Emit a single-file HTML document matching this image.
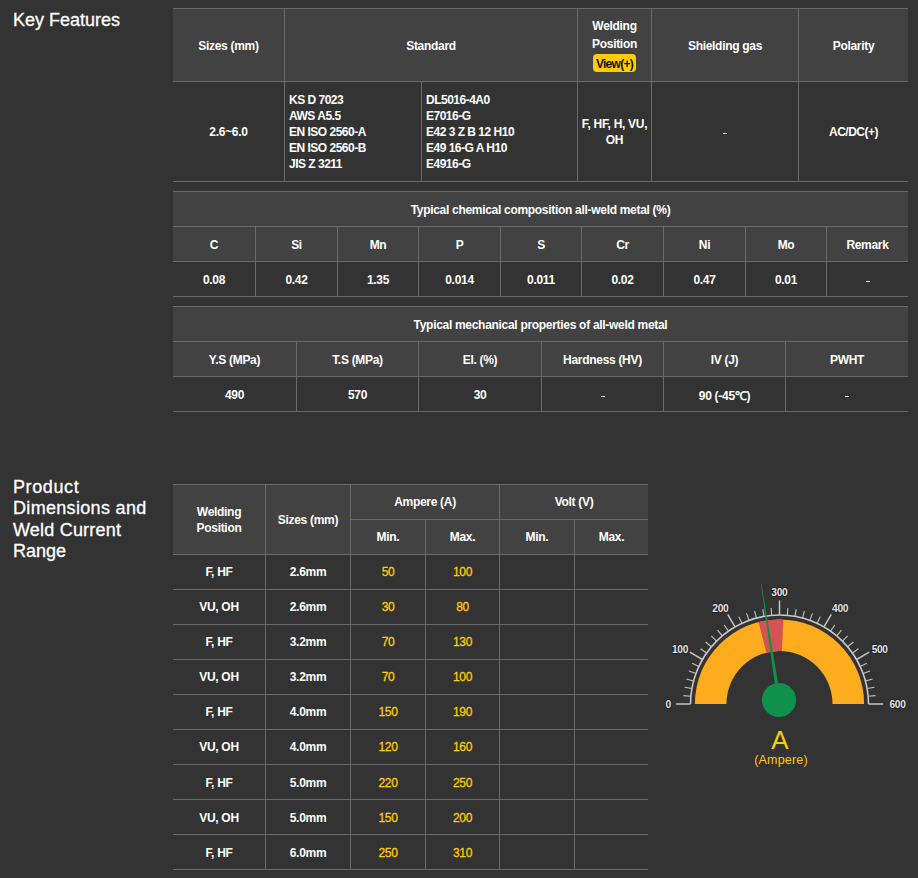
<!DOCTYPE html>
<html><head><meta charset="utf-8"><title>Key Features</title>
<style>
html,body{margin:0;padding:0;}
body{width:918px;height:878px;background:#333333;position:relative;overflow:hidden;font-family:"Liberation Sans",sans-serif;color:#ffffff;}
.r{position:absolute}
.c{position:absolute;display:flex;flex-direction:column;align-items:center;justify-content:center;text-align:center;font-size:12px;font-weight:bold;letter-spacing:-0.3px;white-space:nowrap;}
.left{align-items:flex-start;text-align:left;}
.lh16{line-height:16px}
.ls5{letter-spacing:-0.5px}
.o1{padding-top:2px;box-sizing:border-box}
.yel{color:#ffcc00;font-weight:normal;-webkit-text-stroke:0.3px #ffcc00}
.h{position:absolute;font-size:18px;line-height:26px;white-space:nowrap;-webkit-text-stroke:0.3px #fff}
.badge{background:#ffcc00;color:#111;font-weight:normal;border-radius:4px;width:43px;height:18px;line-height:18px;margin-top:1px;text-align:center;font-size:12px;font-weight:bold;letter-spacing:-0.7px}
.g{position:absolute;left:0;top:0}
.gl{font-family:"Liberation Sans",sans-serif;font-size:10.2px;font-weight:bold;fill:#e6e6e6;stroke:#111;stroke-width:1.2px;paint-order:stroke;letter-spacing:-0.35px}
.ga{font-family:"Liberation Sans",sans-serif;font-size:26px;fill:#ffcc00}
.gb{font-family:"Liberation Sans",sans-serif;font-size:12.5px;letter-spacing:0.2px;fill:#ffcc00}
</style></head><body>
<div class="h" style="left:13px;top:7px">Key Features</div><div class="h" style="left:13px;top:477px;line-height:21.4px;letter-spacing:0.2px"><span style="letter-spacing:0.6px">Product</span><br><span style="letter-spacing:0.32px">Dimensions and</span><br>Weld Current<br><span style="letter-spacing:0px">Range</span></div><div class="r" style="left:173px;top:9px;width:735px;height:72px;background:#424242"></div><div class="r" style="left:173px;top:8px;width:735px;height:1px;background:#6a6a6a"></div><div class="r" style="left:173px;top:81px;width:735px;height:1px;background:#6a6a6a"></div><div class="r" style="left:173px;top:181px;width:735px;height:1px;background:#6a6a6a"></div><div class="r" style="left:284px;top:9px;width:1px;height:172px;background:#6a6a6a"></div><div class="r" style="left:577px;top:9px;width:1px;height:172px;background:#6a6a6a"></div><div class="r" style="left:651px;top:9px;width:1px;height:172px;background:#6a6a6a"></div><div class="r" style="left:798px;top:9px;width:1px;height:172px;background:#6a6a6a"></div><div class="r" style="left:421px;top:82px;width:1px;height:99px;background:#6a6a6a"></div><div class="c o1" style="left:173px;top:9px;width:111px;height:72px;">Sizes (mm)</div><div class="c o1" style="left:285px;top:9px;width:292px;height:72px;">Standard</div><div class="c" style="left:578px;top:9px;width:73px;height:72px;"><div style="line-height:17.4px">Welding<br>Position</div><div class="badge"><span style="position:relative;top:1px">View(+)</span></div></div><div class="c o1" style="left:652px;top:9px;width:146px;height:72px;">Shielding gas</div><div class="c o1" style="left:799px;top:9px;width:109px;height:72px;">Polarity</div><div class="c" style="left:173px;top:82px;width:111px;height:99px;">2.6~6.0</div><div class="c left lh16 ls5" style="left:289px;top:82px;width:132px;height:99px;">KS D 7023<br>AWS A5.5<br>EN ISO 2560-A<br>EN ISO 2560-B<br>JIS Z 3211</div><div class="c left lh16 ls5" style="left:426px;top:82px;width:151px;height:99px;">DL5016-4A0<br>E7016-G<br>E42 3 Z B 12 H10<br>E49 16-G A H10<br>E4916-G</div><div class="c lh16" style="left:578px;top:82px;width:73px;height:99px;">F, HF, H, VU,<br>OH</div><div class="r" style="left:723px;top:133px;width:4px;height:1px;background:#fff"></div><div class="c ls5" style="left:799px;top:82px;width:109px;height:99px;">AC/DC(+)</div><div class="r" style="left:173px;top:192px;width:735px;height:69px;background:#424242"></div><div class="r" style="left:173px;top:191px;width:735px;height:1px;background:#6a6a6a"></div><div class="r" style="left:173px;top:226px;width:735px;height:1px;background:#6a6a6a"></div><div class="r" style="left:173px;top:261px;width:735px;height:1px;background:#6a6a6a"></div><div class="r" style="left:173px;top:296px;width:735px;height:1px;background:#6a6a6a"></div><div class="r" style="left:255px;top:227px;width:1px;height:69px;background:#6a6a6a"></div><div class="r" style="left:337px;top:227px;width:1px;height:69px;background:#6a6a6a"></div><div class="r" style="left:418px;top:227px;width:1px;height:69px;background:#6a6a6a"></div><div class="r" style="left:500px;top:227px;width:1px;height:69px;background:#6a6a6a"></div><div class="r" style="left:581px;top:227px;width:1px;height:69px;background:#6a6a6a"></div><div class="r" style="left:663px;top:227px;width:1px;height:69px;background:#6a6a6a"></div><div class="r" style="left:745px;top:227px;width:1px;height:69px;background:#6a6a6a"></div><div class="r" style="left:826px;top:227px;width:1px;height:69px;background:#6a6a6a"></div><div class="c o1" style="left:173px;top:192px;width:735px;height:34px;">Typical chemical composition all-weld metal (%)</div><div class="c o1" style="left:173px;top:227px;width:82px;height:34px;">C</div><div class="c o1" style="left:173px;top:262px;width:82px;height:34px;">0.08</div><div class="c o1" style="left:256px;top:227px;width:81px;height:34px;">Si</div><div class="c o1" style="left:256px;top:262px;width:81px;height:34px;">0.42</div><div class="c o1" style="left:338px;top:227px;width:80px;height:34px;">Mn</div><div class="c o1" style="left:338px;top:262px;width:80px;height:34px;">1.35</div><div class="c o1" style="left:419px;top:227px;width:81px;height:34px;">P</div><div class="c o1" style="left:419px;top:262px;width:81px;height:34px;">0.014</div><div class="c o1" style="left:501px;top:227px;width:80px;height:34px;">S</div><div class="c o1" style="left:501px;top:262px;width:80px;height:34px;">0.011</div><div class="c o1" style="left:582px;top:227px;width:81px;height:34px;">Cr</div><div class="c o1" style="left:582px;top:262px;width:81px;height:34px;">0.02</div><div class="c o1" style="left:664px;top:227px;width:81px;height:34px;">Ni</div><div class="c o1" style="left:664px;top:262px;width:81px;height:34px;">0.47</div><div class="c o1" style="left:746px;top:227px;width:80px;height:34px;">Mo</div><div class="c o1" style="left:746px;top:262px;width:80px;height:34px;">0.01</div><div class="c o1" style="left:827px;top:227px;width:81px;height:34px;">Remark</div><div class="r" style="left:866px;top:281px;width:4px;height:1px;background:#fff"></div><div class="r" style="left:173px;top:307px;width:735px;height:69px;background:#424242"></div><div class="r" style="left:173px;top:306px;width:735px;height:1px;background:#6a6a6a"></div><div class="r" style="left:173px;top:341px;width:735px;height:1px;background:#6a6a6a"></div><div class="r" style="left:173px;top:376px;width:735px;height:1px;background:#6a6a6a"></div><div class="r" style="left:173px;top:411px;width:735px;height:1px;background:#6a6a6a"></div><div class="r" style="left:296px;top:342px;width:1px;height:69px;background:#6a6a6a"></div><div class="r" style="left:418px;top:342px;width:1px;height:69px;background:#6a6a6a"></div><div class="r" style="left:541px;top:342px;width:1px;height:69px;background:#6a6a6a"></div><div class="r" style="left:663px;top:342px;width:1px;height:69px;background:#6a6a6a"></div><div class="r" style="left:785px;top:342px;width:1px;height:69px;background:#6a6a6a"></div><div class="c o1" style="left:173px;top:307px;width:735px;height:34px;">Typical mechanical properties of all-weld metal</div><div class="c o1" style="left:173px;top:342px;width:123px;height:34px;">Y.S (MPa)</div><div class="c o1" style="left:173px;top:377px;width:123px;height:34px;">490</div><div class="c o1" style="left:297px;top:342px;width:121px;height:34px;">T.S (MPa)</div><div class="c o1" style="left:297px;top:377px;width:121px;height:34px;">570</div><div class="c o1" style="left:419px;top:342px;width:122px;height:34px;">El. (%)</div><div class="c o1" style="left:419px;top:377px;width:122px;height:34px;">30</div><div class="c o1" style="left:542px;top:342px;width:121px;height:34px;">Hardness (HV)</div><div class="r" style="left:601px;top:396px;width:4px;height:1px;background:#fff"></div><div class="c o1" style="left:664px;top:342px;width:121px;height:34px;">IV (J)</div><div class="c o1" style="left:664px;top:377px;width:121px;height:34px;">90 (-45℃)</div><div class="c o1" style="left:786px;top:342px;width:122px;height:34px;">PWHT</div><div class="r" style="left:845px;top:396px;width:4px;height:1px;background:#fff"></div><div class="r" style="left:173px;top:485px;width:475px;height:69px;background:#424242"></div><div class="r" style="left:173px;top:484px;width:475px;height:1px;background:#6a6a6a"></div><div class="r" style="left:350px;top:519px;width:298px;height:1px;background:#6a6a6a"></div><div class="r" style="left:173px;top:554px;width:475px;height:1px;background:#6a6a6a"></div><div class="r" style="left:173px;top:589px;width:475px;height:1px;background:#6a6a6a"></div><div class="r" style="left:173px;top:624px;width:475px;height:1px;background:#6a6a6a"></div><div class="r" style="left:173px;top:659px;width:475px;height:1px;background:#6a6a6a"></div><div class="r" style="left:173px;top:694px;width:475px;height:1px;background:#6a6a6a"></div><div class="r" style="left:173px;top:729px;width:475px;height:1px;background:#6a6a6a"></div><div class="r" style="left:173px;top:764px;width:475px;height:1px;background:#6a6a6a"></div><div class="r" style="left:173px;top:799px;width:475px;height:1px;background:#6a6a6a"></div><div class="r" style="left:173px;top:834px;width:475px;height:1px;background:#6a6a6a"></div><div class="r" style="left:173px;top:869px;width:475px;height:1px;background:#6a6a6a"></div><div class="r" style="left:265px;top:485px;width:1px;height:384px;background:#6a6a6a"></div><div class="r" style="left:350px;top:485px;width:1px;height:384px;background:#6a6a6a"></div><div class="r" style="left:499px;top:485px;width:1px;height:384px;background:#6a6a6a"></div><div class="r" style="left:425px;top:520px;width:1px;height:349px;background:#6a6a6a"></div><div class="r" style="left:574px;top:520px;width:1px;height:349px;background:#6a6a6a"></div><div class="c" style="left:173px;top:485px;width:92px;height:69px;"><div style="line-height:16px">Welding<br>Position</div></div><div class="c" style="left:266px;top:485px;width:84px;height:69px;">Sizes (mm)</div><div class="c" style="left:351px;top:485px;width:148px;height:34px;">Ampere (A)</div><div class="c" style="left:500px;top:485px;width:148px;height:34px;">Volt (V)</div><div class="c" style="left:351px;top:520px;width:74px;height:34px;">Min.</div><div class="c" style="left:426px;top:520px;width:73px;height:34px;">Max.</div><div class="c" style="left:500px;top:520px;width:74px;height:34px;">Min.</div><div class="c" style="left:575px;top:520px;width:73px;height:34px;">Max.</div><div class="c" style="left:173px;top:555.0px;width:92px;height:34.0px;">F, HF</div><div class="c" style="left:266px;top:555.0px;width:84px;height:34.0px;">2.6mm</div><div class="c yel" style="left:351px;top:555.0px;width:74px;height:34.0px;">50</div><div class="c yel" style="left:426px;top:555.0px;width:73px;height:34.0px;">100</div><div class="c" style="left:173px;top:590.09px;width:92px;height:34.0px;">VU, OH</div><div class="c" style="left:266px;top:590.09px;width:84px;height:34.0px;">2.6mm</div><div class="c yel" style="left:351px;top:590.09px;width:74px;height:34.0px;">30</div><div class="c yel" style="left:426px;top:590.09px;width:73px;height:34.0px;">80</div><div class="c" style="left:173px;top:625.18px;width:92px;height:34.0px;">F, HF</div><div class="c" style="left:266px;top:625.18px;width:84px;height:34.0px;">3.2mm</div><div class="c yel" style="left:351px;top:625.18px;width:74px;height:34.0px;">70</div><div class="c yel" style="left:426px;top:625.18px;width:73px;height:34.0px;">130</div><div class="c" style="left:173px;top:660.27px;width:92px;height:34.0px;">VU, OH</div><div class="c" style="left:266px;top:660.27px;width:84px;height:34.0px;">3.2mm</div><div class="c yel" style="left:351px;top:660.27px;width:74px;height:34.0px;">70</div><div class="c yel" style="left:426px;top:660.27px;width:73px;height:34.0px;">100</div><div class="c" style="left:173px;top:695.36px;width:92px;height:34.0px;">F, HF</div><div class="c" style="left:266px;top:695.36px;width:84px;height:34.0px;">4.0mm</div><div class="c yel" style="left:351px;top:695.36px;width:74px;height:34.0px;">150</div><div class="c yel" style="left:426px;top:695.36px;width:73px;height:34.0px;">190</div><div class="c" style="left:173px;top:730.45px;width:92px;height:34.0px;">VU, OH</div><div class="c" style="left:266px;top:730.45px;width:84px;height:34.0px;">4.0mm</div><div class="c yel" style="left:351px;top:730.45px;width:74px;height:34.0px;">120</div><div class="c yel" style="left:426px;top:730.45px;width:73px;height:34.0px;">160</div><div class="c" style="left:173px;top:765.54px;width:92px;height:34.0px;">F, HF</div><div class="c" style="left:266px;top:765.54px;width:84px;height:34.0px;">5.0mm</div><div class="c yel" style="left:351px;top:765.54px;width:74px;height:34.0px;">220</div><div class="c yel" style="left:426px;top:765.54px;width:73px;height:34.0px;">250</div><div class="c" style="left:173px;top:800.63px;width:92px;height:34.0px;">VU, OH</div><div class="c" style="left:266px;top:800.63px;width:84px;height:34.0px;">5.0mm</div><div class="c yel" style="left:351px;top:800.63px;width:74px;height:34.0px;">150</div><div class="c yel" style="left:426px;top:800.63px;width:73px;height:34.0px;">200</div><div class="c" style="left:173px;top:835.72px;width:92px;height:34.0px;">F, HF</div><div class="c" style="left:266px;top:835.72px;width:84px;height:34.0px;">6.0mm</div><div class="c yel" style="left:351px;top:835.72px;width:74px;height:34.0px;">250</div><div class="c yel" style="left:426px;top:835.72px;width:73px;height:34.0px;">310</div><svg class="g" width="918" height="878" viewBox="0 0 918 878"><path d="M694.90,704.00 A84.6,84.6 0 0 1 864.10,704.00 L832.50,704.00 A53,53 0 0 0 726.50,704.00 Z" fill="#fcac1c"/><path d="M758.60,622.02 A84.6,84.6 0 0 1 783.34,619.49 L781.90,651.05 A53,53 0 0 0 766.41,652.64 Z" fill="#d65353"/><path d="M690.50,704.00 A89,89 0 0 1 868.50,704.00" fill="none" stroke="#c8c8c8" stroke-width="1.6"/><line x1="690.50" y1="704.00" x2="675.90" y2="704.00" stroke="#c4c4c4" stroke-width="1.5"/><line x1="690.84" y1="696.24" x2="683.47" y2="695.60" stroke="#c4c4c4" stroke-width="1.1"/><line x1="691.85" y1="688.55" x2="684.56" y2="687.26" stroke="#c4c4c4" stroke-width="1.1"/><line x1="693.53" y1="680.97" x2="686.38" y2="679.05" stroke="#c4c4c4" stroke-width="1.1"/><line x1="695.87" y1="673.56" x2="688.91" y2="671.03" stroke="#c4c4c4" stroke-width="1.1"/><line x1="698.84" y1="666.39" x2="692.13" y2="663.26" stroke="#c4c4c4" stroke-width="1.1"/><line x1="702.42" y1="659.50" x2="689.78" y2="652.20" stroke="#c4c4c4" stroke-width="1.5"/><line x1="706.60" y1="652.95" x2="700.53" y2="648.71" stroke="#c4c4c4" stroke-width="1.1"/><line x1="711.32" y1="646.79" x2="705.65" y2="642.04" stroke="#c4c4c4" stroke-width="1.1"/><line x1="716.57" y1="641.07" x2="711.33" y2="635.83" stroke="#c4c4c4" stroke-width="1.1"/><line x1="722.29" y1="635.82" x2="717.54" y2="630.15" stroke="#c4c4c4" stroke-width="1.1"/><line x1="728.45" y1="631.10" x2="724.21" y2="625.03" stroke="#c4c4c4" stroke-width="1.1"/><line x1="735.00" y1="626.92" x2="727.70" y2="614.28" stroke="#c4c4c4" stroke-width="1.5"/><line x1="741.89" y1="623.34" x2="738.76" y2="616.63" stroke="#c4c4c4" stroke-width="1.1"/><line x1="749.06" y1="620.37" x2="746.53" y2="613.41" stroke="#c4c4c4" stroke-width="1.1"/><line x1="756.47" y1="618.03" x2="754.55" y2="610.88" stroke="#c4c4c4" stroke-width="1.1"/><line x1="764.05" y1="616.35" x2="762.76" y2="609.06" stroke="#c4c4c4" stroke-width="1.1"/><line x1="771.74" y1="615.34" x2="771.10" y2="607.97" stroke="#c4c4c4" stroke-width="1.1"/><line x1="779.50" y1="615.00" x2="779.50" y2="600.40" stroke="#c4c4c4" stroke-width="1.5"/><line x1="787.26" y1="615.34" x2="787.90" y2="607.97" stroke="#c4c4c4" stroke-width="1.1"/><line x1="794.95" y1="616.35" x2="796.24" y2="609.06" stroke="#c4c4c4" stroke-width="1.1"/><line x1="802.53" y1="618.03" x2="804.45" y2="610.88" stroke="#c4c4c4" stroke-width="1.1"/><line x1="809.94" y1="620.37" x2="812.47" y2="613.41" stroke="#c4c4c4" stroke-width="1.1"/><line x1="817.11" y1="623.34" x2="820.24" y2="616.63" stroke="#c4c4c4" stroke-width="1.1"/><line x1="824.00" y1="626.92" x2="831.30" y2="614.28" stroke="#c4c4c4" stroke-width="1.5"/><line x1="830.55" y1="631.10" x2="834.79" y2="625.03" stroke="#c4c4c4" stroke-width="1.1"/><line x1="836.71" y1="635.82" x2="841.46" y2="630.15" stroke="#c4c4c4" stroke-width="1.1"/><line x1="842.43" y1="641.07" x2="847.67" y2="635.83" stroke="#c4c4c4" stroke-width="1.1"/><line x1="847.68" y1="646.79" x2="853.35" y2="642.04" stroke="#c4c4c4" stroke-width="1.1"/><line x1="852.40" y1="652.95" x2="858.47" y2="648.71" stroke="#c4c4c4" stroke-width="1.1"/><line x1="856.58" y1="659.50" x2="869.22" y2="652.20" stroke="#c4c4c4" stroke-width="1.5"/><line x1="860.16" y1="666.39" x2="866.87" y2="663.26" stroke="#c4c4c4" stroke-width="1.1"/><line x1="863.13" y1="673.56" x2="870.09" y2="671.03" stroke="#c4c4c4" stroke-width="1.1"/><line x1="865.47" y1="680.97" x2="872.62" y2="679.05" stroke="#c4c4c4" stroke-width="1.1"/><line x1="867.15" y1="688.55" x2="874.44" y2="687.26" stroke="#c4c4c4" stroke-width="1.1"/><line x1="868.16" y1="696.24" x2="875.53" y2="695.60" stroke="#c4c4c4" stroke-width="1.1"/><line x1="868.50" y1="704.00" x2="883.10" y2="704.00" stroke="#c4c4c4" stroke-width="1.5"/><text x="668.1" y="708.3" text-anchor="middle" class="gl">0</text><text x="680" y="652.5" text-anchor="middle" class="gl">100</text><text x="720.3" y="612.2" text-anchor="middle" class="gl">200</text><text x="779.3" y="596.1" text-anchor="middle" class="gl">300</text><text x="840.1" y="612.2" text-anchor="middle" class="gl">400</text><text x="879.7" y="652.5" text-anchor="middle" class="gl">500</text><text x="897.5" y="708.3" text-anchor="middle" class="gl">600</text><polygon points="780.88,699.71 761.50,584.05 760.90,584.15 777.12,700.29" fill="#0f914b"/><circle cx="779" cy="700" r="17.1" fill="#0f914b"/><text x="780" y="749.4" text-anchor="middle" class="ga">A</text><text x="781" y="763.6" text-anchor="middle" class="gb">(Ampere)</text></svg>
</body></html>
